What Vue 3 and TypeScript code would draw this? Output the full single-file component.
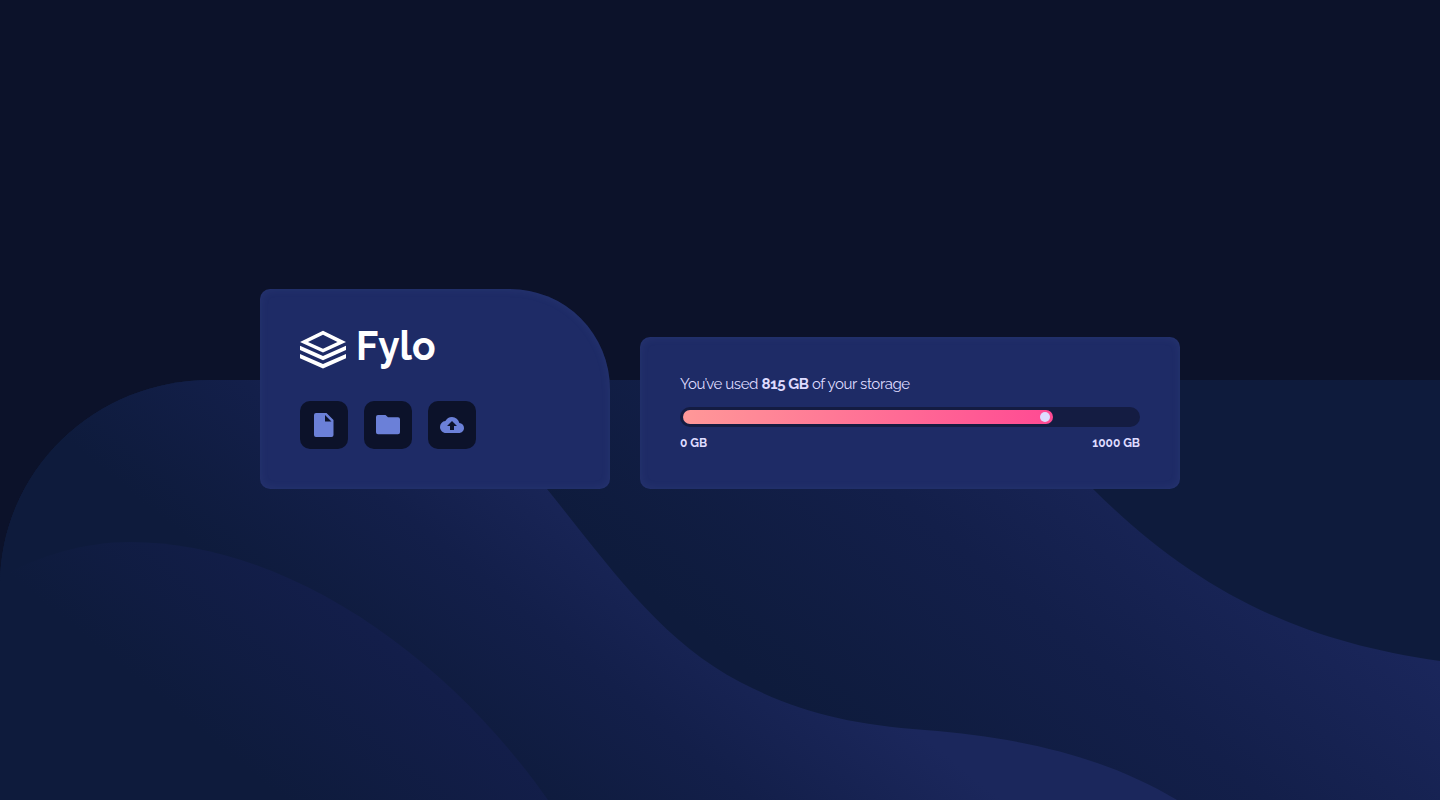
<script setup lang="ts">
const used: number = 815
const total: number = 1000
const fillWidth: string = `${(used / total) * 100}%`
</script>

<template>
  <main class="page">
    <svg class="backdrop" viewBox="0 380 1440 420" preserveAspectRatio="none" aria-hidden="true">
      <defs>
        <linearGradient id="waveFar" gradientUnits="userSpaceOnUse" x1="-30" y1="36" x2="265" y2="-324">
          <stop offset="0" stop-color="#0e1b3c" />
          <stop offset=".5" stop-color="#131f4a" />
          <stop offset="1" stop-color="#1b275d" />
        </linearGradient>
        <linearGradient id="waveMid" gradientUnits="userSpaceOnUse" x1="-189" y1="231" x2="10" y2="-12">
          <stop offset="0" stop-color="#0e1b3c" />
          <stop offset=".5" stop-color="#131f4a" />
          <stop offset="1" stop-color="#1b275c" />
        </linearGradient>
        <linearGradient id="waveNear" gradientUnits="userSpaceOnUse" x1="-278" y1="340" x2="-43" y2="53">
          <stop offset="0" stop-color="#0e1b3c" />
          <stop offset=".5" stop-color="#131e4a" />
          <stop offset="1" stop-color="#1b275f" />
        </linearGradient>
        <clipPath id="outline"><path d="M0 800V585A210 205 0 0 1 210 380H1440V800Z" /></clipPath>
      </defs>
      <g clip-path="url(#outline)">
        <path fill="#0e1b3c" d="M0 380H1440V800H0Z" />
        <path fill="url(#waveFar)" d="M0 380H1000C1030 420 1060 456 1093 489C1190 585 1290 640 1440 661V800H0Z" />
        <path fill="url(#waveMid)" d="M0 380H455C490 415 520 455 547 489C610 567 660 640 740 682C800 713 850 724 925 730C1030 738 1110 760 1177 800H0Z" />
        <path fill="url(#waveNear)" d="M0 577C40 555 85 542 130 542C290 542 450 660 548 800H0Z" />
      </g>
    </svg>

    <div class="cards">
      <section class="card brand">
        <svg class="logo" viewBox="0 0 136 40" role="img" aria-label="Fylo">
          <g fill="#fff">
            <path fill-rule="evenodd" d="M23 1.7L46 13L23 23.4L0 13ZM23 5.7L8 13L23 19.7L37.500 13Z" />
            <path d="M0 16.800L23 27L46 16.800V21L23 31.200L0 21Z" />
            <path d="M0 25L23 35L46 25V29.200L23 39.400L0 29.200Z" />
            <text class="word" transform="translate(56.100 30.600) scale(.95 1)">Fylo</text>
          </g>
        </svg>
        <nav class="actions">
          <button class="action" type="button" aria-label="Document">
            <svg width="20" height="24" viewBox="0 0 20 24"><path fill="#6b80d8" fill-rule="evenodd" d="M2 0H12.500L19.500 7V22A2 2 0 0 1 17.500 24H2A2 2 0 0 1 0 22V2A2 2 0 0 1 2 0ZM11 2V8.500H17.500Z" /></svg>
          </button>
          <button class="action" type="button" aria-label="Folder">
            <svg width="24" height="20" viewBox="0 0 24 20"><path fill="#6b80d8" d="M2 0H9.500L12 2.300H22A2 2 0 0 1 24 4.300V17.300A2 2 0 0 1 22 19.300H2A2 2 0 0 1 0 17.300V2A2 2 0 0 1 2 0Z" /></svg>
          </button>
          <button class="action" type="button" aria-label="Upload">
            <svg width="24" height="16" viewBox="0 0 24 16"><path fill="#6b80d8" fill-rule="evenodd" d="M19.350 6.040A7.490 7.490 0 0 0 12 0C9.110 0 6.600 1.640 5.350 4.040A5.994 5.994 0 0 0 0 10C0 13.310 2.690 16 6 16H19C21.760 16 24 13.760 24 11C24 8.360 21.950 6.220 19.350 6.040ZM14 9V13H10V9H7L12 4L17 9Z" /></svg>
          </button>
        </nav>
      </section>

      <section class="card storage">
        <p class="usage">You’ve used <strong>815 GB</strong> of your storage</p>
        <div class="track">
          <div class="fill" :style="{ width: fillWidth }"><span class="knob"></span></div>
        </div>
        <div class="scale"><span>0 GB</span><span>1000 GB</span></div>
      </section>
    </div>
  </main>
</template>

<style>
body {
  margin: 0;
  background: #0c122a;
}
</style>

<style scoped>
.page {
  display: grid;
  height: 800px;
  overflow: hidden;
  background: #0c122a;
  font-family: Raleway, Lato, sans-serif;
  color: #dedbff;
}
.backdrop {
  grid-area: 1 / 1;
  align-self: end;
  display: block;
  width: 100%;
  height: 420px;
}
.cards {
  grid-area: 1 / 1;
  display: flex;
  justify-content: center;
  align-items: flex-end;
  gap: 30px;
  padding-bottom: 311px;
}
.card {
  box-sizing: border-box;
  padding: 40px;
  border-radius: 10px;
  background: #1e2b66;
  box-shadow: inset 0 0 10px rgba(107, 128, 190, 0.12);
}
.brand {
  width: 350px;
  height: 200px;
  border-top-right-radius: 100px;
}
.logo {
  display: block;
  width: 136px;
  height: 40px;
  overflow: visible;
}
.word {
  font: 700 41px Raleway, Lato, sans-serif;
}
.actions {
  display: flex;
  gap: 16px;
  margin-top: 32px;
}
.action {
  display: flex;
  align-items: center;
  justify-content: center;
  width: 48px;
  height: 48px;
  padding: 0;
  border: 0;
  border-radius: 10px;
  background: #0c122a;
}
.storage {
  width: 540px;
  height: 152px;
  padding-top: 37px;
}
.usage {
  margin: 0 0 13px;
  font-size: 15px;
  line-height: 20px;
  letter-spacing: -0.4px;
}
.track {
  box-sizing: border-box;
  height: 20px;
  padding: 3px;
  border-radius: 10px;
  background: #141c42;
}
.fill {
  box-sizing: border-box;
  display: flex;
  align-items: center;
  justify-content: flex-end;
  height: 14px;
  padding-right: 3px;
  border-radius: 7px;
  background: linear-gradient(to right, #ff9898, #ff4a93);
}
.knob {
  width: 10px;
  height: 10px;
  border-radius: 50%;
  background: #dedbff;
}
.scale {
  display: flex;
  justify-content: space-between;
  margin-top: 8px;
  font-size: 12px;
  font-weight: 700;
  line-height: 16px;
}
</style>
